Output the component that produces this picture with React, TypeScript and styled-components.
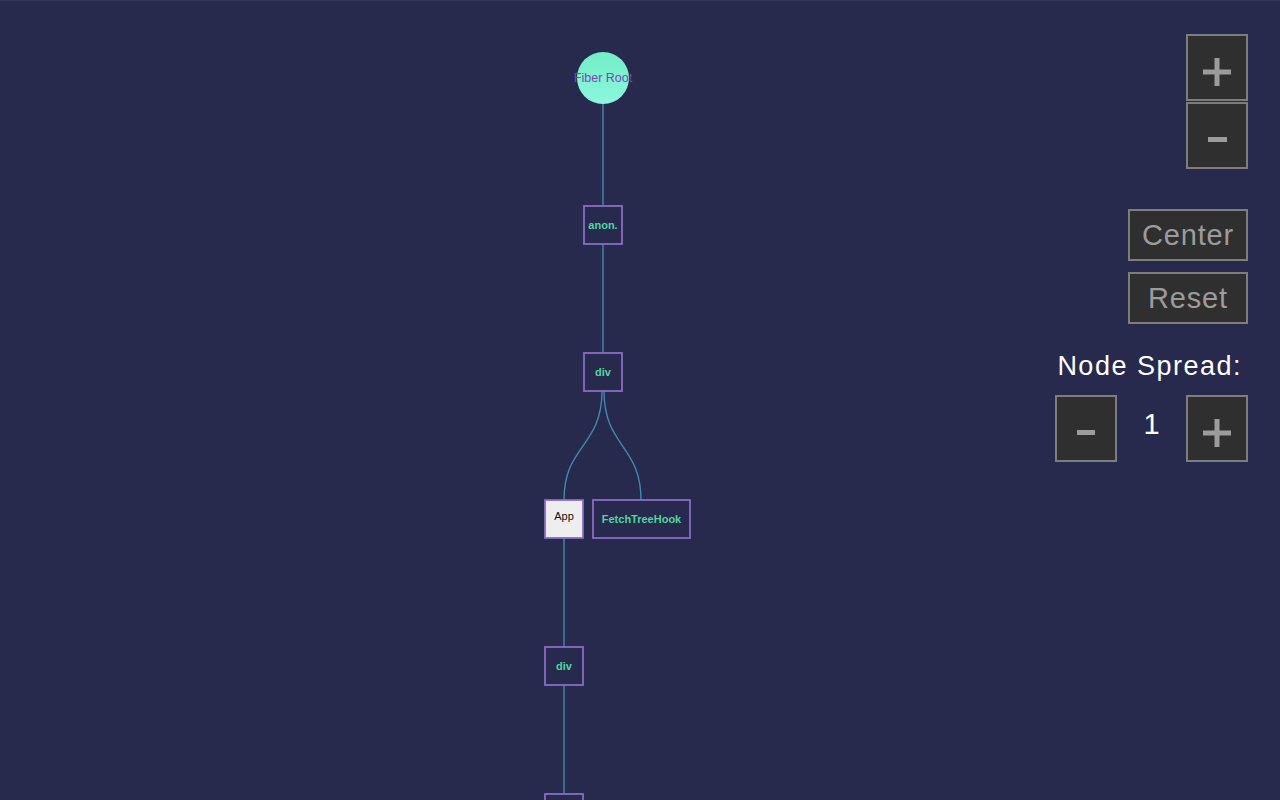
import styled, { createGlobalStyle } from "styled-components";

const GlobalStyle = createGlobalStyle`
  html, body {
    margin: 0;
    padding: 0;
    background: #272a4c;
  }
  #root {
    height: 800px;
  }
`;

const Page = styled.div`
  position: relative;
  width: 1280px;
  height: 800px;
  overflow: hidden;
  background-color: #272a4c;
  border-top: 1px solid #34375a;
  box-sizing: border-box;
  font-family: "Liberation Sans", Arial, sans-serif;
`;

const Canvas = styled.svg`
  display: block;
  width: 1280px;
  height: 800px;
`;

const Controls = styled.div`
  position: absolute;
  top: 33px;
  right: 32px;
  display: flex;
  flex-direction: column;
  align-items: flex-end;
`;

const ZoomGroup = styled.div`
  display: flex;
  flex-direction: column;
  gap: 1px;
  margin-bottom: 40px;
`;

const SquareButton = styled.button`
  width: 62px;
  height: 67px;
  padding: 8px 0 0;
  background-color: #2f2f2f;
  border: 2px solid #7d7d7d;
  display: flex;
  align-items: center;
  justify-content: center;
  cursor: pointer;
`;

const TextButton = styled.button<{ $gap?: number }>`
  width: 120px;
  height: 52px;
  padding: 0;
  margin-bottom: ${(p) => p.$gap ?? 0}px;
  background-color: #2f2f2f;
  border: 2px solid #7d7d7d;
  color: #9c9c9c;
  font-family: "Liberation Sans", Arial, sans-serif;
  font-size: 29px;
  letter-spacing: 0.8px;
  cursor: pointer;
`;

const SpreadLabel = styled.div`
  color: #ffffff;
  font-size: 27px;
  letter-spacing: 1.5px;
  margin-top: 26px;
  margin-right: 6px;
  line-height: 32px;
`;

const SpreadRow = styled.div`
  display: flex;
  align-items: flex-start;
  margin-top: 13px;
`;

const SpreadValue = styled.div`
  width: 69px;
  text-align: center;
  color: #ffffff;
  font-size: 29px;
  line-height: 1;
  padding-top: 15px;
`;

const Bar = styled.span<{ $w: number }>`
  display: block;
  width: ${(p) => p.$w}px;
  height: 5px;
  background-color: #9c9c9c;
`;

const Plus = () => (
  <svg width="28" height="28" viewBox="0 0 28 28">
    <rect x="11.5" y="0" width="5" height="28" fill="#9c9c9c" />
    <rect x="0" y="11.5" width="28" height="5" fill="#9c9c9c" />
  </svg>
);

const LINK = "#4189b0";
const BOX = "#8a6cc4";
const LABEL = "#4fd6a2";

type NodeBox = { x: number; y: number; w: number; label: string; light?: boolean };

const boxes: NodeBox[] = [
  { x: 584, y: 205, w: 38, label: "anon." },
  { x: 584, y: 352, w: 38, label: "div" },
  { x: 545, y: 499, w: 38, label: "App", light: true },
  { x: 593, y: 499, w: 97, label: "FetchTreeHook" },
  { x: 545, y: 646, w: 38, label: "div" },
  { x: 545, y: 793, w: 38, label: "" },
];

const links = [
  "M603,103 L603,205",
  "M603,243 L603,352",
  "M602,390 C602,446 564,444 564,499",
  "M604,390 C604,446 641,444 641,499",
  "M564,537 L564,646",
  "M564,684 L564,793",
];

export default function App() {
  return (
    <>
      <GlobalStyle />
      <Page>
        <Canvas viewBox="0 0 1280 800">
          <defs>
            <linearGradient id="rootFill" x1="0" y1="0" x2="0" y2="1">
              <stop offset="0" stopColor="#72eec6" />
              <stop offset="1" stopColor="#8cf7df" />
            </linearGradient>
          </defs>
          {links.map((d, i) => (
            <path key={i} d={d} fill="none" stroke={LINK} strokeWidth={1.4} />
          ))}
          <circle cx={603} cy={77} r={26} fill="url(#rootFill)" />
          <text
            x={603}
            y={81}
            textAnchor="middle"
            fontFamily="'Liberation Sans', Arial, sans-serif"
            fontSize={12.5}
            fill="#7b46b5"
          >
            Fiber Root
          </text>
          {boxes.map((b, i) => (
            <g key={i}>
              <rect
                x={b.x}
                y={b.y}
                width={b.w}
                height={38}
                fill={b.light ? "#eeeeee" : "#272a4c"}
                stroke={BOX}
                strokeWidth={1.8}
              />
              <text
                x={b.x + b.w / 2}
                y={b.light ? b.y + 20 : b.y + 23}
                textAnchor="middle"
                fontFamily="'Liberation Sans', Arial, sans-serif"
                fontSize={11}
                fontWeight={b.light ? 400 : 700}
                fill={b.light ? "#111111" : LABEL}
              >
                {b.label}
              </text>
            </g>
          ))}
        </Canvas>

        <Controls>
          <ZoomGroup>
            <SquareButton aria-label="zoom in">
              <Plus />
            </SquareButton>
            <SquareButton aria-label="zoom out">
              <Bar $w={19} />
            </SquareButton>
          </ZoomGroup>
          <TextButton $gap={11}>Center</TextButton>
          <TextButton>Reset</TextButton>
          <SpreadLabel>Node Spread:</SpreadLabel>
          <SpreadRow>
            <SquareButton aria-label="less spread">
              <Bar $w={18} />
            </SquareButton>
            <SpreadValue>1</SpreadValue>
            <SquareButton aria-label="more spread">
              <Plus />
            </SquareButton>
          </SpreadRow>
        </Controls>
      </Page>
    </>
  );
}
